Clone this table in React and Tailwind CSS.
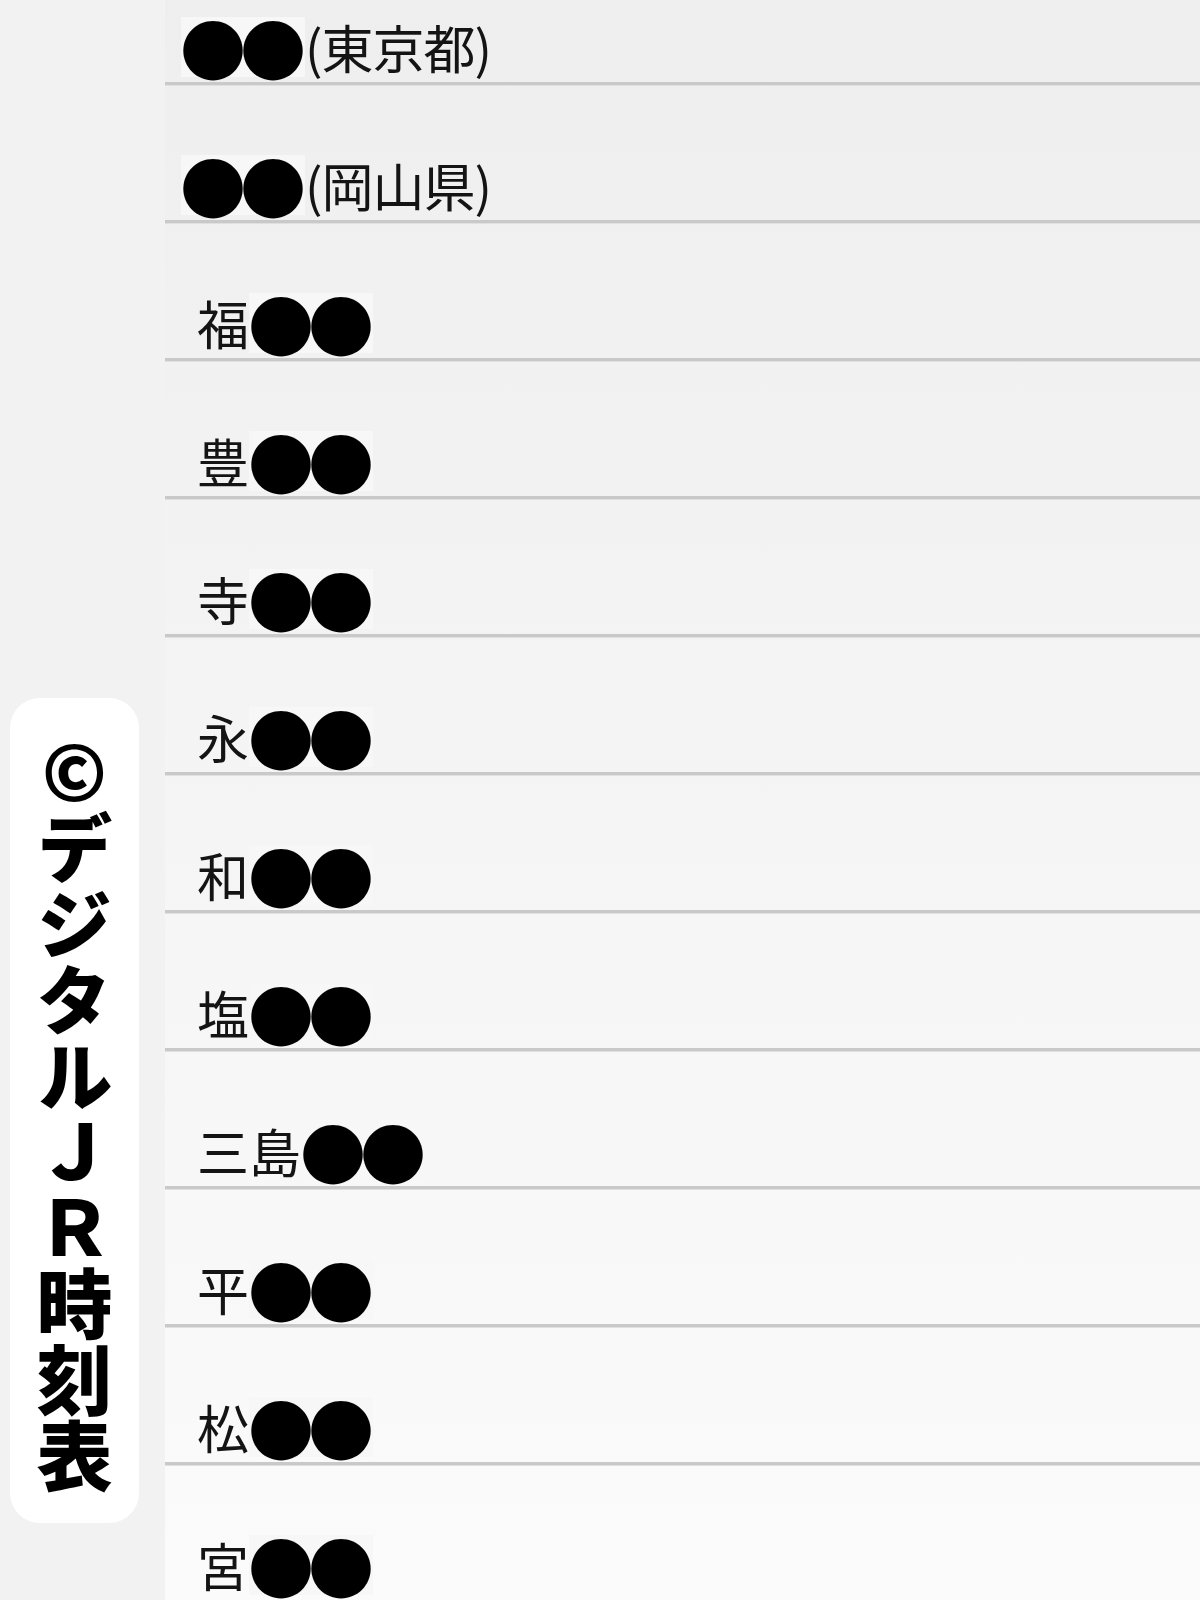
import React from "react";

const JP = { fontFamily: '"Noto Sans CJK JP", "Noto Sans", sans-serif' };

function Dots() {
  return (
    <span className="inline-flex items-center h-[60px] w-[124px] bg-[#f7f7f7] pl-[2px]">
      <span className="inline-flex w-[60px] h-[60px] items-center justify-center text-[66px] leading-none text-black">●</span>
      <span className="inline-flex w-[60px] h-[60px] items-center justify-center text-[66px] leading-none text-black">●</span>
    </span>
  );
}

const rows = [
  { pre: "", post: "(東京都)", lead: true },
  { pre: "", post: "(岡山県)", lead: true },
  { pre: "福" },
  { pre: "豊" },
  { pre: "寺" },
  { pre: "永" },
  { pre: "和" },
  { pre: "塩" },
  { pre: "三島" },
  { pre: "平" },
  { pre: "松" },
  { pre: "宮" },
];

export default function App() {
  return (
    <div className="w-[1200px] h-[1600px] overflow-hidden flex bg-[#f2f2f2]" style={JP}>
      <aside className="w-[165px] shrink-0 flex flex-col justify-end pb-[77px] pl-[10px]">
        <div className="w-[129px] h-[825px] bg-white rounded-[30px] flex justify-center pt-[36px]">
          <div
            className="[writing-mode:vertical-rl] [text-orientation:upright] text-[76px] leading-none font-black text-black"
          >
            ©デジタルＪＲ時刻表
          </div>
        </div>
      </aside>
      <main className="flex-1 flex flex-col -mt-[53px] bg-gradient-to-b from-[#eeeeee] to-[#fbfbfb]">
        {rows.map((r, i) => (
          <div
            key={i}
            className="h-[138px] shrink-0 flex items-end border-b-[3px] border-[#c9c9c9] shadow-[0_1px_0_#e0e0e0]"
          >
            <div
              className={
                "flex items-center h-[60px] mb-[5px] text-[52px] leading-none text-[#141414] " +
                (r.lead ? "pl-[16px]" : "pl-[32px]")
              }
            >
              {r.lead ? (
                <>
                  <Dots />
                  <span className="tracking-[-1px]">{r.post}</span>
                </>
              ) : (
                <>
                  <span>{r.pre}</span>
                  <Dots />
                </>
              )}
            </div>
          </div>
        ))}
      </main>
    </div>
  );
}
